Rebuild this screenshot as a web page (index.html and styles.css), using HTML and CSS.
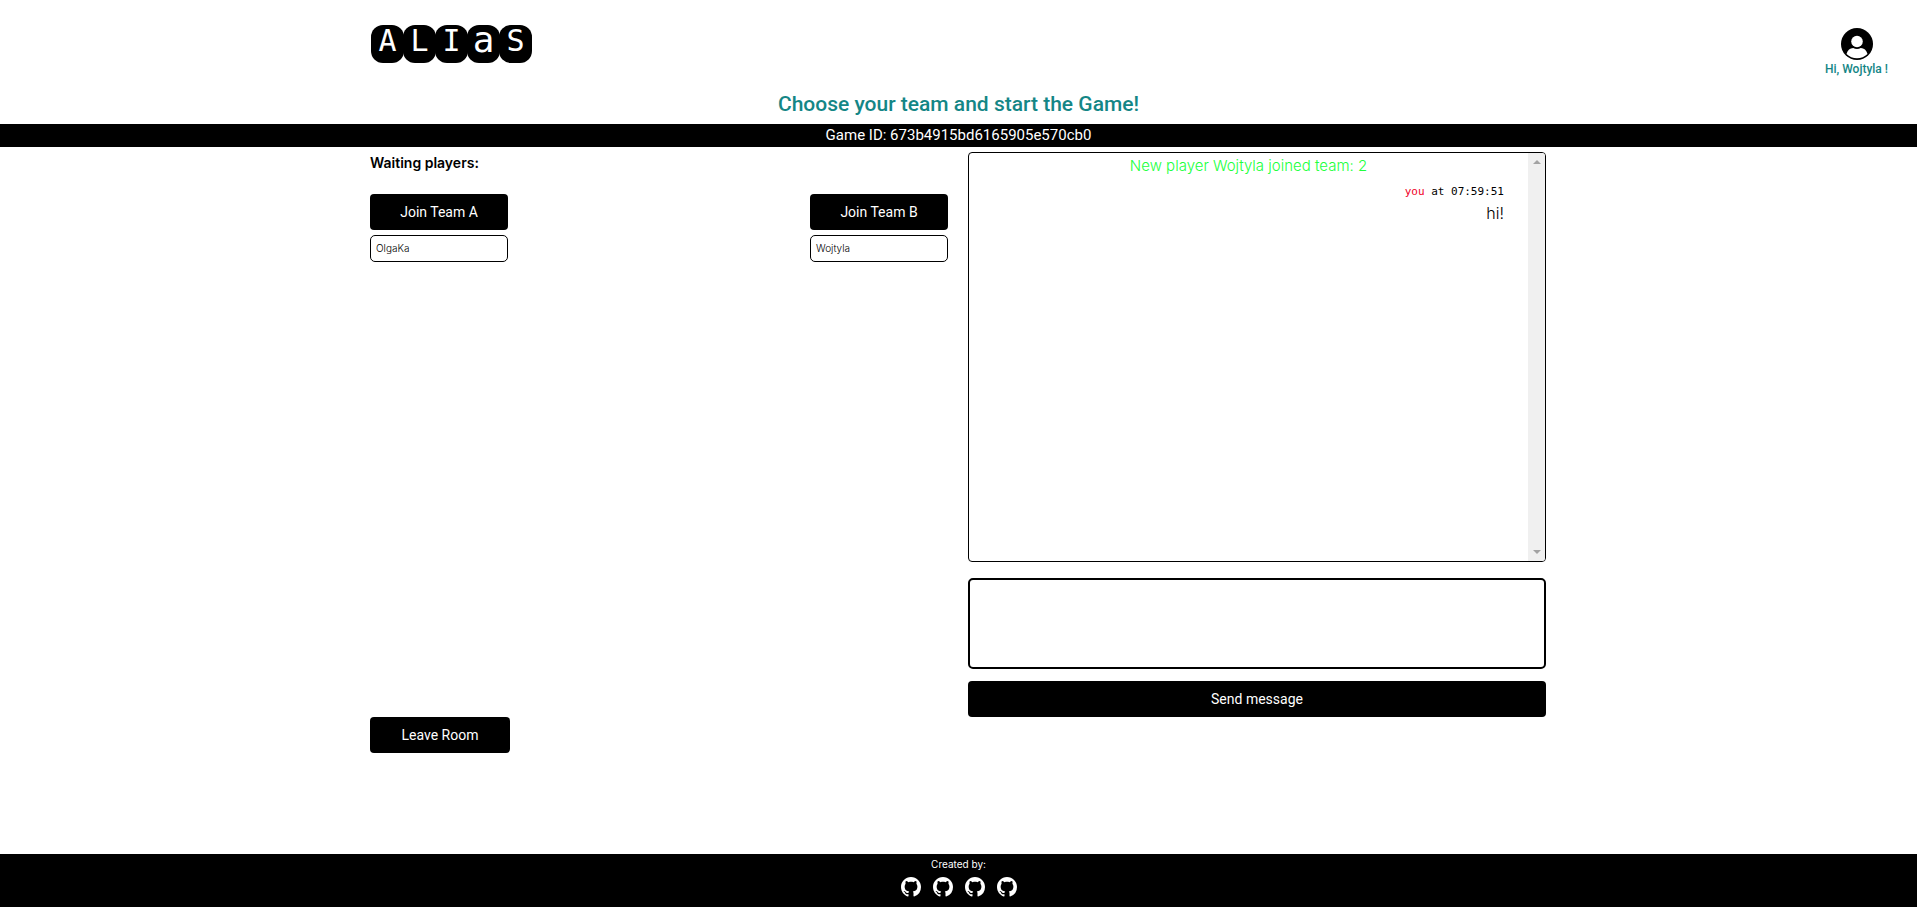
FILE: index.html
```html
<!DOCTYPE html>
<html lang="en">
<head>
<meta charset="utf-8">
<meta name="viewport" content="width=device-width, initial-scale=1">
<title>Alias</title>
<link rel="stylesheet" href="styles.css">
</head>
<body>
<svg class="sprite" aria-hidden="true">
  <symbol id="github" viewBox="0 0 16 16"><path d="M8 0C3.58 0 0 3.58 0 8c0 3.54 2.29 6.53 5.47 7.59.4.07.55-.17.55-.38 0-.19-.01-.82-.01-1.49-2.01.37-2.53-.49-2.69-.94-.09-.23-.48-.94-.82-1.13-.28-.15-.68-.52-.01-.53.63-.01 1.08.58 1.23.82.72 1.21 1.87.87 2.33.66.07-.52.28-.87.51-1.07-1.78-.2-3.64-.89-3.64-3.95 0-.87.31-1.59.82-2.15-.08-.2-.36-1.02.08-2.12 0 0 .67-.21 2.2.82.64-.18 1.32-.27 2-.27s1.36.09 2 .27c1.53-1.04 2.2-.82 2.2-.82.44 1.1.16 1.92.08 2.12.51.56.82 1.27.82 2.15 0 3.07-1.87 3.75-3.65 3.95.29.25.54.73.54 1.48 0 1.07-.01 1.93-.01 2.2 0 .21.15.46.55.38A8.01 8.01 0 0 0 16 8c0-4.42-3.58-8-8-8z"/></symbol>
</svg>
<header class="header">
  <div class="brand container">
    <a class="logo" href="#" aria-label="Alias"><span>A</span><span>L</span><span>I</span><span class="low">a</span><span>S</span></a>
  </div>
  <a class="profile" href="#">
    <svg viewBox="0 0 32 32" aria-hidden="true"><circle cx="16" cy="16" r="16"/><circle cx="16" cy="13.5" r="5.8" fill="#fff"/><path fill="#fff" d="M5.500 26C6.500 22 9 20 12.200 20c2.300 1.300 5.300 1.300 7.600 0 3.200 0 5.700 2 6.700 6-5.500 5.600-15.500 5.600-21 0z"/></svg>
    <span>Hi, Wojtyla !</span>
  </a>
  <h1 class="title">Choose your team and start the Game!</h1>
</header>
<p class="game-id">Game ID: 673b4915bd6165905e570cb0</p>
<main class="room container">
  <section class="players">
    <h2 class="waiting">Waiting players:</h2>
    <div class="teams">
      <div class="team">
        <button class="button" type="button">Join Team A</button>
        <ul class="members"><li>OlgaKa</li></ul>
      </div>
      <div class="team">
        <button class="button" type="button">Join Team B</button>
        <ul class="members"><li>Wojtyla</li></ul>
      </div>
    </div>
    <button class="button leave" type="button">Leave Room</button>
  </section>
  <section class="chat">
    <div class="log">
      <div class="messages">
        <p class="notice">New player Wojtyla joined team: 2</p>
        <div class="message">
          <p class="meta"><span class="author">you</span> at 07:59:51</p>
          <p class="body">hi!</p>
        </div>
      </div>
      <div class="track" aria-hidden="true">
        <svg viewBox="0 0 8 4"><path d="M0 4L4 0L8 4z"/></svg>
        <svg viewBox="0 0 8 4"><path d="M0 0L4 4L8 0z"/></svg>
      </div>
    </div>
    <form class="composer">
      <textarea aria-label="Message"></textarea>
      <button class="button" type="button">Send message</button>
    </form>
  </section>
</main>
<footer class="footer">
  <p>Created by:</p>
  <nav class="authors">
    <a href="#" aria-label="GitHub profile 1"><svg><use href="#github"/></svg></a>
    <a href="#" aria-label="GitHub profile 2"><svg><use href="#github"/></svg></a>
    <a href="#" aria-label="GitHub profile 3"><svg><use href="#github"/></svg></a>
    <a href="#" aria-label="GitHub profile 4"><svg><use href="#github"/></svg></a>
  </nav>
</footer>
</body>
</html>
```
FILE: styles.css
```css
* {
  box-sizing: border-box;
  margin: 0;
  padding: 0;
}

body {
  display: flex;
  flex-direction: column;
  min-height: 100vh;
  background: #fff;
  color: #000;
  font-family: Inter, "Liberation Sans", sans-serif;
}

a {
  color: inherit;
  text-decoration: none;
}

.sprite {
  display: none;
}

.container {
  width: 100%;
  max-width: 1177px;
  margin: 0 auto;
  padding-right: 1px;
}

.header {
  position: relative;
  padding-top: 25px;
}

.logo {
  display: inline-flex;
  vertical-align: top;
  padding-left: 1px;
}

.logo span {
  display: flex;
  justify-content: center;
  width: 33px;
  height: 38px;
  margin-right: -1px;
  border-radius: 12px;
  background: #000;
  color: #fff;
  font-family: "DejaVu Sans Mono", monospace;
  font-size: 30px;
  line-height: 32px;
}

.logo .low {
  font-size: 36px;
  line-height: 30px;
}

.profile {
  position: absolute;
  top: 28px;
  right: 29px;
  display: flex;
  flex-direction: column;
  align-items: center;
  color: #148686;
  font-family: Roboto, sans-serif;
  font-size: 12px;
  font-weight: 500;
  line-height: 18px;
}

.profile svg {
  width: 32px;
  height: 32px;
  fill: #000;
}

.title {
  padding: 26px 0 5px;
  color: #148686;
  font-family: Roboto, sans-serif;
  font-size: 21px;
  font-weight: 500;
  line-height: 30px;
  text-align: center;
}

.game-id {
  background: #000;
  color: #fff;
  font-family: Roboto, sans-serif;
  font-size: 15px;
  line-height: 23px;
  text-align: center;
}

.room {
  display: grid;
  grid-template-columns: 1fr 1fr;
  gap: 20px;
  padding-top: 5px;
}

.players {
  display: flex;
  flex-direction: column;
}

.waiting {
  font-size: 14px;
  font-weight: 600;
  line-height: 22px;
}

.teams {
  display: flex;
  justify-content: space-between;
  min-height: 523px;
  margin-top: 20px;
}

.team {
  width: 138px;
}

.button {
  display: block;
  width: 100%;
  height: 36px;
  border: 0;
  border-radius: 4px;
  background: #000;
  color: #fff;
  font-family: Roboto, sans-serif;
  font-size: 14px;
}

.leave {
  width: 140px;
}

.members {
  margin-top: 5px;
  list-style: none;
}

.members li {
  padding: 0 5px;
  border: 1px solid #000;
  border-radius: 5px;
  font-size: 10px;
  font-weight: 300;
  line-height: 25px;
}

.log {
  display: flex;
  height: 410px;
  overflow: hidden;
  border: 1px solid #000;
  border-radius: 4px;
}

.messages {
  flex: 1;
}

.notice {
  color: #20ff3c;
  font-size: 15px;
  font-weight: 300;
  line-height: 25px;
  text-align: center;
}

.message {
  padding: 5px 24px 0 0;
  text-align: right;
}

.meta {
  font-family: "DejaVu Sans Mono", monospace;
  font-size: 11px;
  line-height: 18px;
}

.author {
  color: #f00028;
}

.body {
  font-size: 16px;
  font-weight: 300;
  line-height: 24px;
}

.track {
  display: flex;
  flex-direction: column;
  justify-content: space-between;
  align-items: center;
  width: 17px;
  padding: 7px 0;
  background: #f0f0f0;
}

.track svg {
  width: 8px;
  height: 4px;
  fill: #a3a3a3;
}

.composer textarea {
  display: block;
  width: 100%;
  height: 91px;
  margin: 16px 0 12px;
  padding: 8px;
  border: 2px solid #000;
  border-radius: 5px;
  background: #fff;
  font: inherit;
  resize: none;
}

.footer {
  display: flex;
  flex-direction: column;
  align-items: center;
  margin-top: auto;
  padding-bottom: 10px;
  background: #000;
  color: #fff;
  font-size: 10px;
  line-height: 20px;
}

.authors {
  display: flex;
  gap: 12px;
  padding-top: 3px;
}

.authors svg {
  display: block;
  width: 20px;
  height: 20px;
  fill: #fff;
}
```
